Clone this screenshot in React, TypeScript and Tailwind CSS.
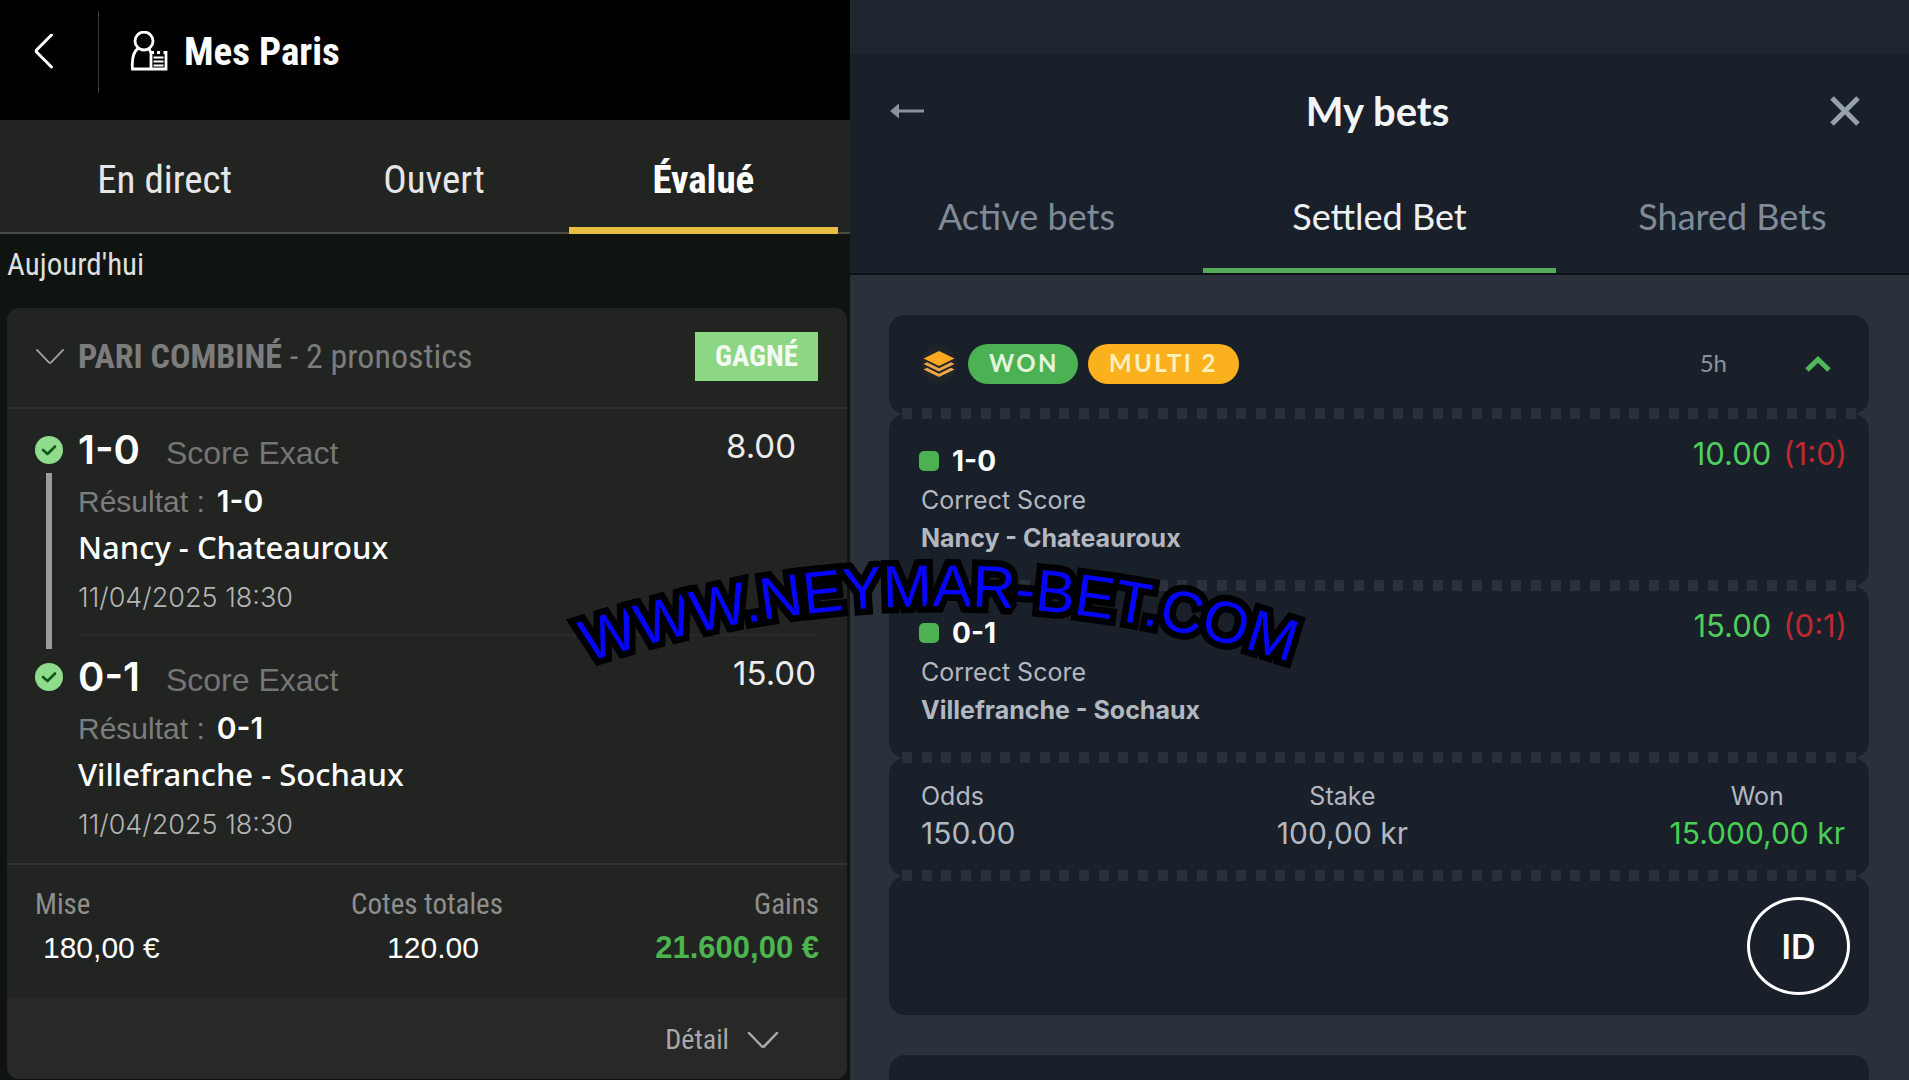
import { Fragment } from 'react'

const legsFr = [
  { score: '1-0', match: 'Nancy - Chateauroux', date: '11/04/2025 18:30', odds: '8.00' },
  { score: '0-1', match: 'Villefranche - Sochaux', date: '11/04/2025 18:30', odds: '15.00' },
]

const legsEn = [
  { score: '1-0', match: 'Nancy - Chateauroux', odds: '10.00', result: '(1:0)' },
  { score: '0-1', match: 'Villefranche - Sochaux', odds: '15.00', result: '(0:1)' },
]

function ChevronDown({ className }: { className: string }) {
  return (
    <svg viewBox="0 0 32 18" fill="none" stroke="currentColor" strokeLinecap="round" strokeLinejoin="round" className={className}>
      <path d="M2 2 L14.5 15 Q16 16.5 17.5 15 L30 2" />
    </svg>
  )
}

function CheckBadge() {
  return (
    <svg viewBox="0 0 28 28" className="mt-[27px] size-7 shrink-0">
      <circle cx="14" cy="14" r="14" fill="#8fdc8c" />
      <path d="M8 14 L12.5 18 L20 10.5" fill="none" stroke="#12561f" strokeWidth="2.6" strokeLinecap="round" strokeLinejoin="round" />
    </svg>
  )
}

// Perforated line between two ticket sections
function Perforation() {
  return (
    <div className="relative mx-[13px] -mt-[6px] -mb-[5px] flex h-[11px] justify-between">
      {Array.from({ length: 49 }, (_, i) => (
        <span key={i} className="w-[10px] bg-[#2b313a]" />
      ))}
    </div>
  )
}

function MesParis() {
  return (
    <section className="flex min-h-screen flex-col bg-[#0f1411] font-['Roboto_Condensed','Liberation_Sans_Narrow',Roboto,sans-serif]">
      <header className="flex h-[120px] items-center bg-black pb-4 pl-[34px] text-white">
        <button aria-label="Retour">
          <svg viewBox="0 0 20 36" fill="none" stroke="currentColor" strokeWidth="3" strokeLinecap="round" strokeLinejoin="round" className="h-9 w-5">
            <path d="M17.5 1 L3 15.5 Q1.5 17 3 18.5 L17.5 33" />
          </svg>
        </button>
        <span className="ml-11 h-[82px] w-px bg-[#3a3a3a]" />
        <svg viewBox="0 0 38 42" fill="none" stroke="currentColor" strokeWidth="2.8" className="ml-[31px] h-[42px] w-[38px]">
          <circle cx="14" cy="10" r="9" />
          <path d="M8.5 17 C3 21 1.5 27 2.5 38 H36 V21.5 H33.5 M30 21.5 H27 M24 21.5 H21 V38 M20.5 21.5 C20 19.5 19.5 18 18.5 17" />
          <path d="M23.5 26.5 H33.5 M23.5 30.5 H33.5 M23.5 34.5 H33.5" strokeWidth="2" />
        </svg>
        <h1 className="ml-4 text-[39px] leading-[48px] font-bold">Mes Paris</h1>
      </header>

      <nav className="grid h-[114px] grid-cols-3 border-b-2 border-[#4a4b49] bg-[#222422] pr-3 pl-[30px] text-[39px] text-[#e6e6e6]">
        <button className="pt-[9px]">En direct</button>
        <button className="pt-[9px]">Ouvert</button>
        <button className="-mb-[2px] border-b-[7px] border-[#e8bd45] pt-[14px] font-bold text-white">Évalué</button>
      </nav>

      <h2 className="pb-3 pl-[7px] text-[31px] leading-[62px] text-[#dedede]">Aujourd'hui</h2>

      <article className="mr-[3px] mb-px ml-[7px] flex grow flex-col overflow-hidden rounded-xl bg-[#222422]">
        <div className="flex h-[101px] items-center border-b-2 border-[#2e302e] pr-[29px] pb-[3px] pl-7 text-[34px] text-[#7b7c7b]">
          <ChevronDown className="h-[17px] w-[30px] stroke-2 text-[#a0a0a0]" />
          <p className="ml-[13px]"><b>PARI COMBINÉ</b> - 2 pronostics</p>
          <span className="ml-auto bg-[#8cd684] px-5 text-[29px] leading-[49px] font-bold text-[#f3fbf2]">GAGNÉ</span>
        </div>

        {legsFr.map((leg, i) => (
          <div key={leg.match} className="flex h-[227px] gap-[15px] pr-[31px] pl-7 font-[Inter,sans-serif]">
            <div className="flex flex-col items-center">
              <CheckBadge />
              {i === 0 && <span className="relative mt-[9px] -mb-[13px] w-[6px] grow bg-[#9b9b9b]" />}
            </div>
            <div className={i === 0 ? 'flex grow justify-between border-b-2 border-[#2a2c2a] pt-3' : 'flex grow justify-between pt-3'}>
              <div>
                <p className="flex items-baseline gap-[26px] leading-[58px]">
                  <b className="text-[40px] font-semibold text-white">{leg.score}</b>
                  <span className="font-['Liberation_Sans',sans-serif] text-[32px] text-[#747574]">Score Exact</span>
                </p>
                <p className="flex items-baseline gap-3 leading-[38px]">
                  <span className="font-['Liberation_Sans',sans-serif] text-[30px] text-[#7c7d7c]">Résultat :</span>
                  <b className="text-[30px] font-semibold text-white">{leg.score}</b>
                </p>
                <p className="font-['Noto_Sans',sans-serif] text-[31px] leading-[52px] font-medium text-white">{leg.match}</p>
                <time className="block text-[27px] leading-[50px] font-light text-[#b4b4b4]">{leg.date}</time>
              </div>
              <span className={i === 0 ? 'pr-5 text-[33px] leading-[50px] text-[#ececec]' : 'text-[33px] leading-[50px] text-[#ececec]'}>{leg.odds}</span>
            </div>
          </div>
        ))}

        <dl className="grid h-[135px] grid-cols-3 border-t-2 border-[#333533] px-7 pt-[17px] text-[29px] leading-[44px] text-[#8d8e8d]">
          <div>
            <dt>Mise</dt>
            <dd className="pl-2 font-['Liberation_Sans',sans-serif] text-[30px] text-white">180,00 €</dd>
          </div>
          <div className="text-center">
            <dt>Cotes totales</dt>
            <dd className="pl-3 font-['Liberation_Sans',sans-serif] text-[30px] text-white">120.00</dd>
          </div>
          <div className="text-right">
            <dt>Gains</dt>
            <dd className="font-['Liberation_Sans',sans-serif] text-[31px] font-bold whitespace-nowrap text-[#4cb550]">21.600,00 €</dd>
          </div>
        </dl>

        <div className="flex grow items-center justify-end bg-[#282828] pt-[2px] pr-[68px]">
          <button className="flex items-center gap-[18px] text-[28px] leading-9 text-[#a9a9a9]">
            Détail
            <ChevronDown className="h-[18px] w-8 stroke-[2.5]" />
          </button>
        </div>
      </article>
    </section>
  )
}

function MyBets() {
  return (
    <section className="flex min-h-screen flex-col bg-[#2b313a] font-[Inter,sans-serif] text-[#b3b8c0]">
      <div className="h-[54px] bg-[#1f2630]" />
      <header className="border-b-2 border-[#0c1118] bg-[#19202a] font-[Lato,sans-serif]">
        <div className="flex h-[114px] items-center justify-between pr-12 pb-px pl-10">
          <button aria-label="Back" className="text-[#87929d]">
            <svg viewBox="0 0 36 16" className="h-4 w-9">
              <path d="M0 8 L9 0.5 V6.5 H34 V9.5 H9 V15.5 Z" fill="currentColor" />
            </svg>
          </button>
          <h1 className="text-[40px] font-bold text-[#f2f5f8]">My bets</h1>
          <button aria-label="Close" className="text-[#97a1ab]">
            <svg viewBox="0 0 32 32" stroke="currentColor" strokeWidth="5" className="size-8">
              <path d="M3 3 L29 29 M29 3 L3 29" />
            </svg>
          </button>
        </div>
        <nav className="grid h-[105px] grid-cols-3 text-[36px] text-[#7f8b96]">
          <button className="pb-[10px]">Active bets</button>
          <button className="border-b-[5px] border-[#55aa5b] pb-[5px] text-[#eef1f4]">Settled Bet</button>
          <button className="pb-[10px]">Shared Bets</button>
        </nav>
      </header>

      <div className="flex grow flex-col pt-10 pr-10 pl-[39px]">
        <div className="flex h-[99px] items-center rounded-2xl bg-[#19202a] pr-[38px] pb-[2px] pl-8 font-[Lato,sans-serif]">
          <svg viewBox="0 0 36 36" className="size-9">
            <circle cx="18" cy="18" r="18" fill="#222428" />
            <path d="M18 5 L33.5 12.5 L18 20 L2.5 12.5 Z" fill="#fca71f" />
            <path d="M2.5 18 L6 16.3 L18 22.2 L30 16.3 L33.5 18 L18 25.5 Z" fill="#f0a64a" />
            <path d="M2.5 23.5 L6 21.8 L18 27.7 L30 21.8 L33.5 23.5 L18 31 Z" fill="#f0a64a" />
          </svg>
          <span className="ml-[11px] flex h-10 items-center rounded-full bg-[#4bb152] pr-[19px] pb-[2px] pl-[21px] text-2xl font-bold tracking-widest text-[#e3f6dd]">WON</span>
          <span className="ml-[10px] flex h-10 items-center rounded-full bg-[#fbb01d] pr-[21px] pb-[2px] pl-[21px] text-2xl font-bold tracking-widest text-[#fdf0bd]">MULTI 2</span>
          <span className="ml-auto pb-[2px] text-2xl text-[#89939e]">5h</span>
          <button aria-label="Collapse" className="ml-[78px]">
            <svg viewBox="0 0 26 16" fill="none" stroke="#4fb85a" strokeWidth="5" className="h-4 w-[26px]">
              <path d="M2 14 L13 3.5 L24 14" />
            </svg>
          </button>
        </div>

        {legsEn.map((leg) => (
          <Fragment key={leg.match}>
            <Perforation />
            <div className="flex h-[172px] justify-between rounded-2xl bg-[#19202a] pr-[22px] pl-8">
              <div className="pt-[27px] text-[25px] leading-[38px]">
                <p className="-ml-[2px] flex items-center gap-[13px] text-[28px] leading-[40px] font-bold text-white">
                  <span className="size-5 rounded-[5px] bg-[#4db153]" />
                  {leg.score}
                </p>
                <p>Correct Score</p>
                <p className="font-bold">{leg.match}</p>
              </div>
              <p className="flex gap-3 pt-5 text-[31px] leading-[40px] text-[#4fce5c]">
                {leg.odds}
                <span className="text-[#c0282f]">{leg.result}</span>
              </p>
            </div>
          </Fragment>
        ))}

        <Perforation />
        <dl className="flex h-[118px] justify-between rounded-2xl bg-[#19202a] pt-5 pr-6 pl-8 text-[30px] leading-[38px]">
          <div>
            <dt className="text-[25px] leading-9">Odds</dt>
            <dd>150.00</dd>
          </div>
          <div className="text-center">
            <dt className="text-[25px] leading-9">Stake</dt>
            <dd>100,00 kr</dd>
          </div>
          <div className="text-center">
            <dt className="text-[25px] leading-9">Won</dt>
            <dd className="text-[#48cf55]">15.000,00 kr</dd>
          </div>
        </dl>

        <Perforation />
        <div className="flex h-[139px] justify-end rounded-2xl bg-[#19202a] pt-[21px] pr-[19px]">
          <button className="h-[98px] w-[103px] rounded-[50%] border-[3px] border-white text-[34px] font-semibold text-white">ID</button>
        </div>

        <div className="mt-10 grow rounded-t-2xl bg-[#19202a]" />
      </div>
    </section>
  )
}

// Site name on an arc, laid over both panels
function Watermark() {
  return (
    <svg viewBox="0 0 760 140" className="pointer-events-none absolute top-[540px] left-[49%] h-[140px] w-[760px] -translate-x-1/2">
      <path id="arc" d="M37 121 A1124 1124 0 0 1 731 121" fill="none" />
      <text
        className="font-['Liberation_Sans',sans-serif] text-[59px]"
        fill="#0505ff"
        stroke="#000"
        strokeWidth="13"
        strokeMiterlimit="2"
        paintOrder="stroke"
        textAnchor="middle"
      >
        <textPath href="#arc" startOffset="50%">WWW.NEYMAR-BET.COM</textPath>
      </text>
    </svg>
  )
}

export default function App() {
  return (
    <main className="relative grid min-h-screen grid-cols-[850fr_1059fr]">
      <MesParis />
      <MyBets />
      <Watermark />
    </main>
  )
}
